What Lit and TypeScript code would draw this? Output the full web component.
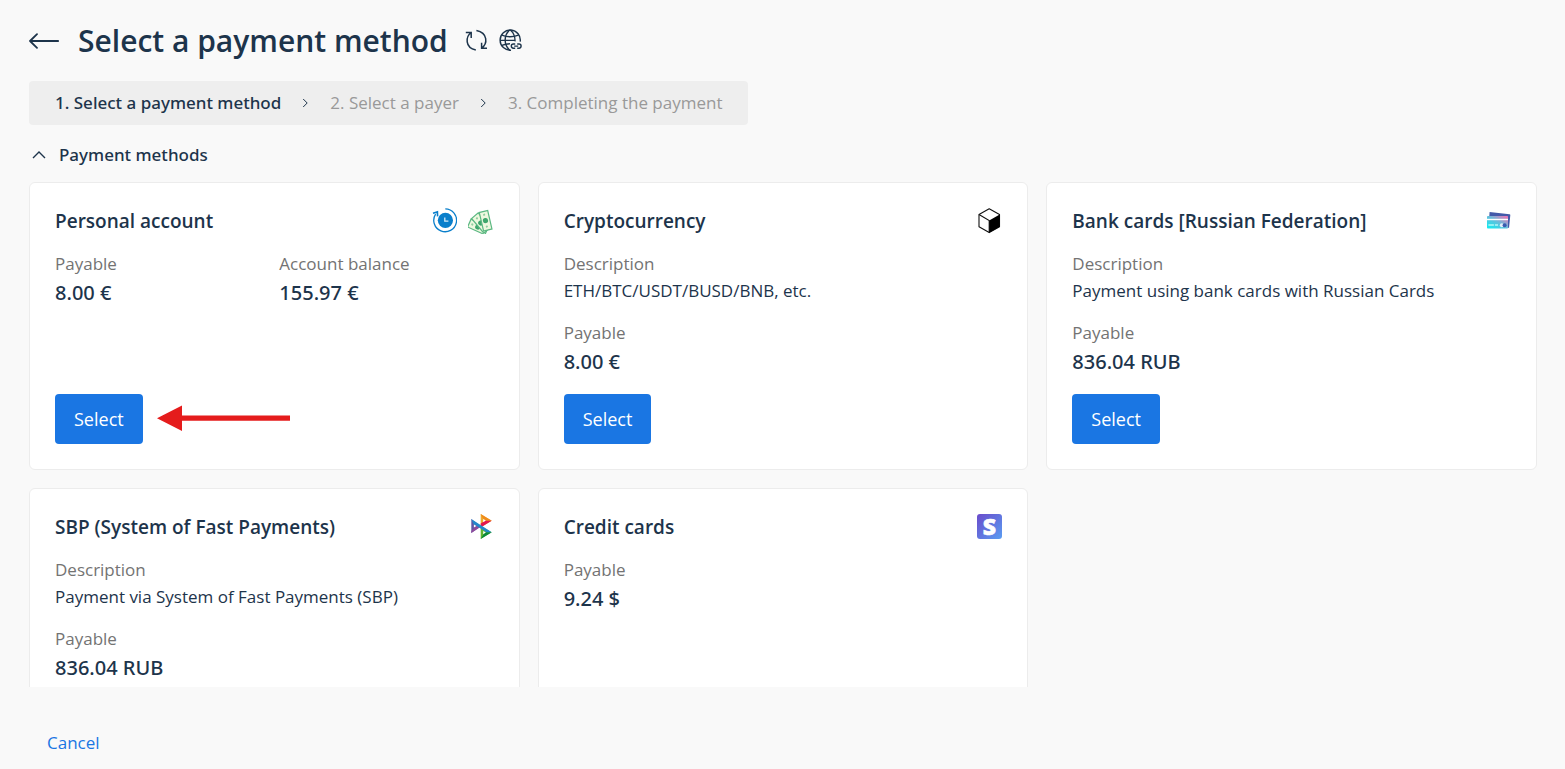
import { LitElement, html, css, svg, nothing } from "lit";
import { customElement, property, state } from "lit/decorators.js";

interface Field {
  label: string;
  value: string;
  amount?: boolean;
}

interface Method {
  title: string;
  icons: string[];
  rows: Field[][];
  pointer?: boolean;
}

const STEPS = ["1. Select a payment method", "2. Select a payer", "3. Completing the payment"];

const METHODS: Method[] = [
  {
    title: "Personal account",
    icons: ["clock", "cash"],
    rows: [[
      { label: "Payable", value: "8.00 €", amount: true },
      { label: "Account balance", value: "155.97 €", amount: true },
    ]],
    pointer: true,
  },
  {
    title: "Cryptocurrency",
    icons: ["cube"],
    rows: [
      [{ label: "Description", value: "ETH/BTC/USDT/BUSD/BNB, etc." }],
      [{ label: "Payable", value: "8.00 €", amount: true }],
    ],
  },
  {
    title: "Bank cards [Russian Federation]",
    icons: ["cards"],
    rows: [
      [{ label: "Description", value: "Payment using bank cards with Russian Cards" }],
      [{ label: "Payable", value: "836.04 RUB", amount: true }],
    ],
  },
  {
    title: "SBP (System of Fast Payments)",
    icons: ["sbp"],
    rows: [
      [{ label: "Description", value: "Payment via System of Fast Payments (SBP)" }],
      [{ label: "Payable", value: "836.04 RUB", amount: true }],
    ],
  },
  {
    title: "Credit cards",
    icons: ["stripe"],
    rows: [[{ label: "Payable", value: "9.24 $", amount: true }]],
  },
];

const banknote = (angle: number) => svg`
  <g transform="rotate(${angle} 20 23.5)">
    <rect x="15.8" y="3" width="8.6" height="19" fill="#eef8df" stroke="#5cb883" stroke-width="1.2"/>
    <circle cx="20" cy="12.3" r="2.6" fill="#3fa66c"/>
    <circle cx="20" cy="6.3" r="1.1" fill="#8fcfa0"/>
    <circle cx="20" cy="18.4" r="1.1" fill="#8fcfa0"/>
  </g>`;

const ICONS: Record<string, unknown> = {
  clock: svg`
    <path d="M14.3 0.9A11.4 11.4 0 1 1 4.6 6.1" fill="none" stroke="#0a7fcb" stroke-width="1.3"/>
    <path d="M2 5.2L6.4 3.9L6.6 8.4" fill="none" stroke="#0a7fcb" stroke-width="1.6"/>
    <circle cx="14.4" cy="12.3" r="7.6" fill="#0a7fcb"/>
    <path d="M13.8 9.4V13.1H17.4" fill="none" stroke="#d5ebf8" stroke-width="1.3"/>`,
  cash: svg`${banknote(-66)}${banknote(-40)}${banknote(-13)}`,
  cube: svg`
    <path d="M13.2 0.7L23.5 6.5V18.7L13.2 24.6L3 18.7V6.5Z" fill="#fff" stroke="#111" stroke-width="1.1" stroke-linejoin="round"/>
    <path d="M3 6.5L13.2 12.5V24.6" fill="none" stroke="#111" stroke-width="1.1"/>
    <path d="M13.2 12.5L23.7 6.4V18.8L13.2 24.8Z" fill="#000"/>`,
  cards: svg`
    <defs>
      <linearGradient id="g" x1="0" y1="1" x2="1" y2="0">
        <stop offset="0.1" stop-color="#19e8ef"/><stop offset="0.5" stop-color="#62bfdc"/><stop offset="1" stop-color="#f86fb4"/>
      </linearGradient>
    </defs>
    <path d="M4.6 4L24.6 6.2Q25.4 6.4 25.3 7.2L24 20L4 12Z" fill="#4359a9"/>
    <rect x="2" y="8" width="21" height="12.6" rx="0.8" fill="url(#g)"/>
    <rect x="2" y="10.8" width="21" height="1.4" fill="#fff"/>
    <path d="M3.4 17H13" stroke="#b6f6f6" stroke-width="1.4" stroke-dasharray="5.5 1"/>
    <circle cx="16.8" cy="17.3" r="2" fill="#e4eef8"/>
    <circle cx="19.6" cy="17.3" r="2" fill="#3b5bb0"/>`,
  sbp: svg`
    <path d="M3.3 5L12.7 12.2L3.3 19Z" fill="#5f57a6"/>
    <path d="M3.3 19V17L8.4 11.6L13.2 12.6Z" fill="#8f4b9c"/>
    <path d="M12.7 0L23.7 6.7L12.7 13.3Z" fill="#ecab2f"/>
    <path d="M12.7 0L23.7 6.7H17.5L14.6 4Z" fill="#f08a1c"/>
    <path d="M23.7 6.7L12.7 13.4V9.6L17.2 6.7Z" fill="#e2184f"/>
    <path d="M12.7 12L23.7 18.3L12.7 25Z" fill="#62b52f"/>
    <path d="M12.7 25L16 19.4L18 18.3H23.7Z" fill="#0b8a3c"/>
    <path d="M3.3 5L23.7 18.3H18.6L5.4 10Z" fill="#2388cb"/>
    <path d="M5.9 10.4V13.6L8.4 12Z" fill="#fff"/>
    <path d="M15.2 5V8.2L17.8 6.6Z" fill="#fff"/>
    <path d="M15.2 17V20.2L17.8 18.5Z" fill="#fff"/>`,
  stripe: svg`
    <defs>
      <linearGradient id="g" x1="0" y1="0" x2="1" y2="1">
        <stop offset="0" stop-color="#6a4bcb"/><stop offset="1" stop-color="#5a9df2"/>
      </linearGradient>
    </defs>
    <rect x="1" y="0" width="25" height="25" rx="3" fill="url(#g)"/>
    <text x="13.4" y="20.7" text-anchor="middle" font-family="Open Sans, sans-serif" font-weight="800" font-size="23" fill="#fff" stroke="#fff" stroke-width="0.6">S</text>`,
};

@customElement("payment-card")
export class PaymentCard extends LitElement {
  @property({ attribute: false }) method!: Method;

  static styles = css`
    :host {
      display: flex;
      flex-direction: column;
      box-sizing: border-box;
      min-height: 288px;
      padding: 25px;
      gap: 18px;
      background: #fff;
      border: 1px solid #ececec;
      border-radius: 6px;
    }
    .head, .icons, .actions { display: flex; align-items: center; }
    .head { justify-content: space-between; }
    .icons { gap: 11px; }
    .icon { width: 26px; height: 26px; }
    .title { margin: 0; font-size: 19px; line-height: 26px; font-weight: 600; }
    .row { display: grid; grid-auto-flow: column; grid-auto-columns: 1fr; gap: 10px; margin: 0; }
    .field { display: flex; flex-direction: column; gap: 3px; }
    .label { color: #737373; }
    .value { margin: 0; }
    .amount { font-family: "Noto Sans", sans-serif; font-size: 20px; line-height: 28px; font-weight: 500; }
    .actions { margin-top: auto; gap: 14px; }
    .select {
      height: 50px;
      padding: 0 19px;
      border: 0;
      border-radius: 4px;
      background: #1a76e3;
      color: #fff;
      font: inherit;
      font-size: 18px;
      cursor: pointer;
    }
    .pointer { width: 133px; height: 28px; }
  `;

  render() {
    const m = this.method;
    return html`
      <div class="head">
        <h2 class="title">${m.title}</h2>
        <div class="icons">
          ${m.icons.map((i) => html`<svg class="icon" viewBox="0 0 26 26" aria-hidden="true">${ICONS[i]}</svg>`)}
        </div>
      </div>
      ${m.rows.map((row) => html`
        <dl class="row">
          ${row.map((f) => html`
            <div class="field">
              <dt class="label">${f.label}</dt>
              <dd class="value ${f.amount ? "amount" : ""}">${f.value}</dd>
            </div>`)}
        </dl>`)}
      <div class="actions">
        <button class="select" type="button">Select</button>
        ${m.pointer
          ? html`<svg class="pointer" viewBox="0 0 133 28" aria-hidden="true">
              <path d="M0 13.3L25 0.5V10.5H133V15.7H25V26Z" fill="#e51c1c"/>
            </svg>`
          : nothing}
      </div>`;
  }
}

@customElement("app-root")
export class AppRoot extends LitElement {
  @state() private open = true;

  static styles = css`
    :host {
      display: flex;
      flex-direction: column;
      box-sizing: border-box;
      height: 100vh;
      padding: 19px 28px 14px 29px;
      background: #f9f9f9;
      color: #1d344b;
      font: 400 17px/24px "Open Sans", "Noto Sans", sans-serif;
    }
    button { font: inherit; color: inherit; background: none; border: 0; padding: 0; cursor: pointer; }
    svg { display: block; }
    .header { display: flex; align-items: center; }
    .back { margin-right: 19px; }
    .heading { margin: 0 17px 0 0; font-size: 30px; line-height: 44px; font-weight: 600; }
    .tools { display: flex; gap: 11px; }
    .steps {
      display: flex;
      align-items: center;
      align-self: flex-start;
      gap: 21px;
      margin: 18px 0;
      padding: 10px 26px;
      list-style: none;
      background: #eee;
      border-radius: 4px;
      color: #999;
    }
    .step { display: flex; align-items: center; gap: 21px; }
    .current, .toggle { color: #1d344b; font-family: "Noto Sans", sans-serif; font-weight: 500; }
    .chevron { color: #1d344b; }
    .toggle { display: flex; align-items: center; align-self: flex-start; gap: 13px; margin-bottom: 15px; padding-left: 3px; }
    .closed { transform: rotate(180deg); }
    .scroll { flex: 1; min-height: 0; overflow-y: auto; scrollbar-width: none; }
    .grid { display: grid; grid-template-columns: repeat(3, 1fr); gap: 18px; }
    .footer { padding: 44px 18px 0; }
    .cancel { display: block; color: #1a76e3; }
  `;

  render() {
    return html`
      <header class="header">
        <button class="back" type="button" aria-label="Back">
          <svg width="30" height="16" viewBox="0 0 30 16" fill="none" stroke="currentColor" stroke-width="1.8" stroke-linecap="round" stroke-linejoin="round">
            <path d="M8 1.2L1 8L8 14.8M1 8H29.2"/>
          </svg>
        </button>
        <h1 class="heading">Select a payment method</h1>
        <div class="tools">
          <button type="button" aria-label="Refresh">
            <svg width="23" height="24" viewBox="0 0 23 24" fill="none" stroke="currentColor" stroke-width="1.5">
              <path d="M0.8 3.5H6.2V9M6.2 3.5C0.6 7.6 -0.4 18.6 10.8 21"/>
              <path d="M22 19.2H16.6V13.7M16.6 19.2C22.6 15 23.2 4 11.4 1.6"/>
            </svg>
          </button>
          <button type="button" aria-label="Copy link">
            <svg width="23" height="24" viewBox="0 0 23 24" fill="none" stroke="currentColor" stroke-width="1.4">
              <path d="M12 21.2A10.1 10.1 0 1 1 21.2 12.6"/>
              <path d="M10.8 1C4.6 6 4.6 16 10.8 21.2M11.4 1C14.8 4 16.2 8 16 12.4"/>
              <path d="M2.8 6.2Q11 9.4 19.4 6.2M1 11.4H16M2.8 16.4Q6.6 14.8 11 14.8"/>
              <path d="M16.2 15H14.4A2.1 2.1 0 0 0 14.4 19.2H16.2M18.2 15H20A2.1 2.1 0 0 1 20 19.2H18.2M15.2 17.1H19.2"/>
            </svg>
          </button>
        </div>
      </header>
      <ol class="steps">
        ${STEPS.map((s, i) => html`
          <li class="step">
            ${i
              ? html`<svg class="chevron" width="7" height="10" viewBox="0 0 7 10" fill="none" stroke="currentColor" stroke-width="1"><path d="M1.2 1L5.2 5L1.2 9"/></svg>`
              : nothing}
            <span class=${i ? "" : "current"}>${s}</span>
          </li>`)}
      </ol>
      <button class="toggle" type="button" aria-expanded=${this.open} @click=${() => (this.open = !this.open)}>
        <svg class=${this.open ? "" : "closed"} width="14" height="8" viewBox="0 0 14 8" fill="none" stroke="currentColor" stroke-width="1.4"><path d="M1 7L7 1L13 7"/></svg>
        Payment methods
      </button>
      <main class="scroll">
        ${this.open
          ? html`<div class="grid">${METHODS.map((m) => html`<payment-card .method=${m}></payment-card>`)}</div>`
          : nothing}
      </main>
      <footer class="footer">
        <button class="cancel" type="button">Cancel</button>
      </footer>`;
  }
}
